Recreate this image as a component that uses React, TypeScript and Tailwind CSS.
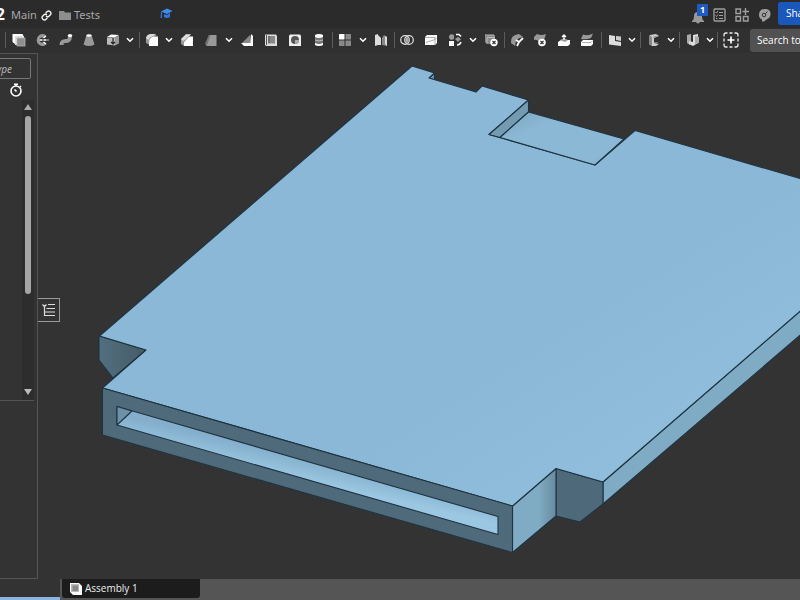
import React from "react";

type IconProps = { children: React.ReactNode };

function Glyph({ children }: IconProps) {
  return (
    <svg viewBox="0 0 14 14" className="size-[14px] shrink-0" aria-hidden="true">
      {children}
    </svg>
  );
}

function Tool({ label, children }: { label: string; children: React.ReactNode }) {
  return (
    <button type="button" aria-label={label} className="flex h-6 w-[23px] shrink-0 items-center justify-center">
      <Glyph>{children}</Glyph>
    </button>
  );
}

function More({ label }: { label: string }) {
  return (
    <button type="button" aria-label={label} className="flex h-6 w-[11px] shrink-0 items-center justify-center">
      <svg viewBox="0 0 8 6" className="h-[6px] w-2" aria-hidden="true">
        <path d="M1 1.2 4 4.2 7 1.2" fill="none" stroke="#fff" strokeWidth="1.6" />
      </svg>
    </button>
  );
}

const group = "flex h-4 shrink-0 items-center justify-between border-r border-[#5c5c5c]";

function Toolbar() {
  return (
    <div className="flex h-[25px] shrink-0 items-center overflow-hidden bg-[#303030] pb-px">
      <div className="h-4 w-[6px] shrink-0 border-r border-[#5c5c5c]" />
      <div className={group + " w-[134px] pl-px pr-[3px]"}>
        <Tool label="Extrude">
          <path d="M.5 1h10l1 2H3v8L.5 9z" fill="#fff" />
          <path d="M3 3h9v2H5v7H3z" fill="#ddd" />
          <rect x="5" y="5" width="8" height="8" fill="#8e8e8e" stroke="#bbb" strokeWidth=".7" />
        </Tool>
        <Tool label="Revolve">
          <path d="M11 2.700 9.500 1.300A6 6 0 1 0 9.500 12.700L11.500 11 8.500 9A2.500 2.500 0 1 1 8.500 5z" fill="#999" />
          <path d="M4.500 7h9" stroke="#fff" strokeWidth="1.300" strokeDasharray="3 1" />
          <path d="m8.500 5 2.500-2M8.500 9l2.500 2" stroke="#fff" strokeWidth="1.300" />
        </Tool>
        <Tool label="Sweep">
          <path d="M2.500 12c0-4 2-4 4.500-4s4-1 4-5" fill="none" stroke="#999" strokeWidth="4" />
          <ellipse cx="11" cy="2.500" rx="2.200" ry="1.500" fill="#fff" />
        </Tool>
        <Tool label="Loft">
          <path d="M4.500 2h5l3 9.500q-5.500 3-11 0z" fill="#999" />
          <ellipse cx="7" cy="2.500" rx="2.700" ry="1.300" fill="#fff" />
        </Tool>
        <Tool label="Thicken">
          <path d="m1 4 4-2.500 8 .5-4 2.500z" fill="#fff" />
          <path d="M1 4.500h8v8l-8-1z" fill="#bbb" />
          <path d="m9 4.500 4-2v8l-4 2z" fill="#999" />
          <path d="M7 5v6M5 9l2 2 2-2" fill="none" stroke="#222" strokeWidth="1.200" />
        </Tool>
        <More label="More solid tools" />
      </div>
      <div className={group + " w-[193px] pr-[2px]"}>
        <Tool label="Fillet">
          <path d="m1 5 4-3.500 7 .5-3 2q-4 1-4 8L1 10z" fill="#999" />
          <path d="M4 13V8.500Q5 4 9 3.500h4V13z" fill="#fff" />
          <path d="M1 5q1-4 5-4h5L8 3Q4 4 3.500 7z" fill="#ddd" />
        </Tool>
        <More label="More fillet tools" />
        <Tool label="Chamfer">
          <path d="m1 6 5-5h5L4 9v4l-3-2z" fill="#999" />
          <path d="M4 13V9l5-5.500h4V13z" fill="#fff" />
          <path d="M1 6 6 1.500h5L8 4 3.500 8z" fill="#ddd" />
        </Tool>
        <Tool label="Draft">
          <path d="M6 2h6.500v11H2.500z" fill="#999" />
          <path d="m5 1.500-4 9.500 1.500 2L6.500 2.500z" fill="#777" />
        </Tool>
        <More label="More draft tools" />
        <Tool label="Rib">
          <path d="m11 1 2 2v10H4l-3-3h9z" fill="#fff" />
          <path d="m10 2 .5 8H2z" fill="#888" />
        </Tool>
        <Tool label="Shell">
          <path d="M1 1.500h11l1 1.500v10H2l-1-1z" fill="#ddd" />
          <path d="M4 3h7v7.500H4z" fill="#888" />
          <path d="M5 3v7M2.500 2v10" stroke="#555" />
        </Tool>
        <Tool label="Hole">
          <path d="m1 2.500 1-1h10l1 1V13H1z" fill="#eee" />
          <circle cx="7" cy="7" r="4" fill="#555" />
          <path d="M7 7h4A4 4 0 0 1 7 11z" fill="#aaa" />
        </Tool>
        <Tool label="Thread">
          <path d="M3 2q4-2 8 0v10q-4 2-8 0z" fill="#777" />
          <path d="M3 2q4-2 8 0v2q-4 2-8 0zM3 10q4 2 8 0v2q-4 2-8 0z" fill="#fff" />
          <path d="M3 7q4 2 8 0" fill="none" stroke="#bbb" />
        </Tool>
      </div>
      <div className={group + " w-[62px] pr-[2px]"}>
        <Tool label="Pattern">
          <rect x="1" y="1" width="5.500" height="5.500" rx=".5" fill="#fff" />
          <path d="M7.500 1H13v5.500H7.500zM1 7.500h5.500V13H1zM7.500 7.500H13V13H7.500z" fill="#888" />
        </Tool>
        <More label="More pattern tools" />
        <Tool label="Mirror">
          <path d="m1 2 3-1v11l-3 1zM4 2l3 3v7H4z" fill="#ddd" />
          <path d="m8 5 2-3 3 2v9l-5-1z" fill="#888" />
          <path d="M11 3v8l2 2V4z" fill="#ddd" />
        </Tool>
      </div>
      <div className={group + " w-[110px] pr-[2px]"}>
        <Tool label="Boolean">
          <circle cx="5" cy="7" r="4.300" fill="none" stroke="#ddd" strokeWidth="1.200" />
          <circle cx="9" cy="7" r="4.300" fill="none" stroke="#ddd" strokeWidth="1.200" />
          <path d="M7 3.500q3.500 3.500 0 7-3.500-3.500 0-7" fill="#aaa" />
        </Tool>
        <Tool label="Split">
          <path d="M1 4l2-2h10v8l-2 2H1z" fill="#fff" />
          <path d="M1 4.500h10V12M2 9.500l9-3 2-2" fill="none" stroke="#888" strokeWidth=".7" />
        </Tool>
        <Tool label="Transform">
          <path d="m1 3 2-2 3 1v4L3 7 1 5z" fill="#999" />
          <path d="M1 8h5v5H1z" fill="#fff" />
          <path d="m7 6 3-2 3 2-3 3z" fill="#999" />
          <path d="M8 1.500h3l2 2M13 9q-1 3-4 3" fill="none" stroke="#fff" strokeWidth="1.600" />
        </Tool>
        <More label="More transform tools" />
        <Tool label="Delete part">
          <path d="M1 2h10v9H3l-2-2z" fill="#888" />
          <path d="M1 2h9M3 4.500h8M3 4.500v6" stroke="#bbb" />
          <circle cx="10" cy="9.500" r="3.700" fill="#fff" />
          <path d="m8.500 8 3 3m0-3-3 3" stroke="#333" strokeWidth="1.200" />
        </Tool>
      </div>
      <div className={group + " w-[97px] pr-[2px]"}>
        <Tool label="Modify fillet">
          <path d="M1 10q-1-8 8-9l4 3q-8 1-8 9z" fill="#999" />
          <path d="m6 7 3 2m4-4-4 4-2 4" fill="none" stroke="#fff" strokeWidth="1.800" />
        </Tool>
        <Tool label="Delete face">
          <path d="m1 4 3-3q4 2 9 0l-2 6-5 2Q4 6 1 7z" fill="#999" />
          <circle cx="9" cy="9.500" r="3.800" fill="#fff" />
          <path d="m7.500 8 3 3m0-3-3 3" stroke="#333" strokeWidth="1.200" />
        </Tool>
        <Tool label="Move face">
          <path d="m1 9 3-2h9v4l-2 2H1z" fill="#fff" />
          <path d="m3 7 4-2 4 2-3 2z" fill="#999" />
          <path d="M7 7V2M5 4l2-2 2 2" fill="none" stroke="#fff" strokeWidth="1.300" />
        </Tool>
        <Tool label="Replace face">
          <path d="m1 6 2-4.500q5 2 10-1l-2 4.500q-5 2-10 1" fill="#999" />
          <path d="m1 9 2-2h10v4l-2 2H1z" fill="#fff" />
          <path d="M2 9.500h9l2-2" fill="none" stroke="#888" strokeWidth=".7" />
        </Tool>
      </div>
      <div className={group + " w-[39px] pl-px pr-[3px]"}>
        <Tool label="Sheet metal">
          <path d="m1 2 6 1v5l6 1v4L1 11.500z" fill="#ddd" />
          <path d="m8 3 5 .5V8L8 7z" fill="#ccc" />
        </Tool>
        <More label="More sheet metal tools" />
      </div>
      <div className={group + " w-[39px] pl-px pr-[3px]"}>
        <Tool label="Frame">
          <path d="m3 2 6-1 3 2-5 2v5l5 1-3 2H5l-3-2z" fill="#ccc" />
          <path d="m2 2 3 2v9l-3-2z" fill="#888" />
          <path d="m6 4.500 4-1.500M7 9.500h4" stroke="#888" strokeWidth=".8" />
        </Tool>
        <More label="More frame tools" />
      </div>
      <div className={group + " w-[38px] pl-px pr-[2px]"}>
        <Tool label="Custom features">
          <path d="m1 2 4-1v7l-1 4-3-2z" fill="#aaa" />
          <path d="m3 8 4 1V2l5-1v9l-5 3-4-2z" fill="#ddd" />
          <path d="m9 3 4 1v6l-4 1z" fill="#aaa" />
        </Tool>
        <More label="More custom features" />
      </div>
      <button type="button" aria-label="Add custom feature" className="flex h-6 w-[26px] shrink-0 items-center justify-center">
        <svg viewBox="0 0 16 16" className="size-4" fill="none" aria-hidden="true">
          <path d="M1 4.500V3q0-2 2-2h1.500M6.500 1h3M11.500 1H13q2 0 2 2v1.500M15 6.500v3M15 11.500V13q0 2-2 2h-1.500M9.500 15h-3M4.500 15H3q-2 0-2-2v-1.500M1 9.500v-3" stroke="#eee" strokeWidth="1.300" />
          <path d="M8 4.500v7M4.500 8h7" stroke="#fff" strokeWidth="1.700" />
        </svg>
      </button>
      <button type="button" className="ml-[6px] h-[23px] shrink-0 whitespace-nowrap rounded-[3px] bg-[#515151] px-[7px] font-['Open_Sans',sans-serif] text-[10px] font-medium leading-[23px] text-white">
        Search tools…
      </button>
    </div>
  );
}

function Header() {
  return (
    <header className="flex h-7 shrink-0 items-center overflow-hidden bg-[#2b2b2b] text-[11px] text-[#a8a8a8]">
      <span className="flex w-[5px] shrink-0 justify-end text-[16px] font-bold text-white">2</span>
      <span className="ml-[6px] w-[30px] pt-[2px]">Main</span>
      <button type="button" aria-label="Copy link" className="mt-[2px]">
        <svg viewBox="0 0 12 12" className="size-[11px]" fill="none" stroke="#f2f2f2" strokeWidth="1.500" aria-hidden="true">
          <path d="M5 3.500 7 1.500Q8.500 .5 10 2t.5 3L8.500 7Q7 8 5.500 6.500M7 8.500l-2 2Q3.500 11.500 2 10t-.5-3L3.500 5Q5 4 6.500 5.500" />
        </svg>
      </button>
      <a href="#tests" className="ml-[7px] flex items-center gap-[3px] pt-[2px]">
        <svg viewBox="0 0 12 10" className="h-[10px] w-3" aria-hidden="true">
          <path d="M0 1h5l1 1.500h6V10H0z" fill="#8e8e8e" />
        </svg>
        Tests
      </a>
      <button type="button" aria-label="Learning center" className="ml-[60px]">
        <svg viewBox="0 0 13 12" className="h-3 w-[13px]" aria-hidden="true">
          <path d="m1 3.500 6-3 5.500 2.500L7 6z" fill="#418af0" />
          <path d="M4 6v3q3 2 6 0V5L7 7zM1 4h1v6H.5z" fill="#2f75dc" />
        </svg>
      </button>
      <div className="ml-auto flex h-full shrink-0 items-center">
        <button type="button" aria-label="Notifications, 1 unread" className="relative mt-[5px] w-3">
          <svg viewBox="0 0 12 14" className="h-[14px] w-3" aria-hidden="true">
            <path d="M0 11q2-1 2-5 0-4 4-4t4 4q0 4 2 5v1H0zM4 12h4q-2 3-4 0" fill="#999" />
          </svg>
          <span className="absolute -top-[6px] left-[5px] h-3 w-[11px] bg-[#1b5bc2] text-center text-[9px] font-bold leading-3 text-white">1</span>
        </button>
        <button type="button" aria-label="Release tasks" className="ml-[9px] mt-[2px]">
          <svg viewBox="0 0 13 14" className="h-[14px] w-[13px]" fill="none" stroke="#a0a0a0" aria-hidden="true">
            <rect x="1" y="1" width="11" height="12" rx="1" strokeWidth="1.300" />
            <path d="m2.500 4 1 1L5 3M6 4.500h4M2.500 7.500l1 1L5 6.500M6 7.500h4M3 10.500h1.500M6 10.500h4" />
          </svg>
        </button>
        <button type="button" aria-label="App store" className="ml-[9px] mt-[2px]">
          <svg viewBox="0 0 14 14" className="size-[14px]" fill="none" stroke="#a0a0a0" strokeWidth="1.400" aria-hidden="true">
            <path d="M1 1h4.500v4.500H1zM1 8.500h4.500V13H1zM8.500 8.500H13V13H8.500zM10.500 0v7M7.500 3.500H14" />
          </svg>
        </button>
        <button type="button" aria-label="Help" className="ml-[9px] mt-[2px]">
          <svg viewBox="0 0 13 14" className="h-[14px] w-[13px]" aria-hidden="true">
            <path d="M4 13.500v-2Q1 10 1 7q0-6 6-6 5.500 0 5.500 5 0 4-4 5.500L6 13.500z" fill="#a0a0a0" />
            <circle cx="6" cy="7" r="1.800" fill="none" stroke="#333" />
            <path d="m7.500 5.500 2-2" stroke="#333" />
          </svg>
        </button>
        <div className="ml-[7px] h-full w-[22px] overflow-hidden pt-[2px]">
          <button type="button" className="h-[23px] w-11 rounded-[3px] bg-[#1b58bb] pl-2 text-left font-['Open_Sans',sans-serif] text-[10px] font-medium leading-[23px] text-white">Share</button>
        </div>
      </div>
    </header>
  );
}

function Sidebar() {
  return (
    <aside className="flex w-[38px] shrink-0 flex-col border-b border-r border-t border-[#555]">
      <div className="mt-1 flex w-[31px] justify-end overflow-hidden">
        <input
          aria-label="Filter by name or type"
          placeholder="Filter by name or type"
          className="h-[21px] w-40 shrink-0 rounded-[2px] border border-[#777] bg-transparent pr-[18px] text-right text-[10px] italic text-white outline-none placeholder:text-[#b5b5b5]"
        />
      </div>
      <button type="button" aria-label="Regeneration times" className="ml-[9px] mt-1 size-[14px]">
        <svg viewBox="0 0 14 14" className="size-[14px]" fill="none" stroke="#fff" strokeWidth="1.600" aria-hidden="true">
          <circle cx="7" cy="8" r="5" />
          <path d="M5 1.200h4M7 1v2M11 3l1 1M7.500 8.500 5.500 6.500" />
        </svg>
      </button>
      <div className="mr-[3px] mt-[3px] flex h-[301px] justify-end border-b border-[#555]">
        <div className="flex w-3 flex-col items-center bg-[#2d2d2d] pb-[5px] pt-1">
          <svg viewBox="0 0 8 6" className="mb-[6px] h-[6px] w-2" aria-hidden="true">
            <path d="M0 6 4 0l4 6z" fill="#aaa" />
          </svg>
          <div className="h-[178px] w-[6px] rounded-full bg-[#a5a5a5]" />
          <svg viewBox="0 0 8 6" className="mt-auto h-[6px] w-2" aria-hidden="true">
            <path d="M0 0h8L4 6z" fill="#bbb" />
          </svg>
        </div>
      </div>
    </aside>
  );
}

function Model() {
  return (
    <svg viewBox="38 53 762 526" preserveAspectRatio="xMidYMid slice" className="absolute inset-0 size-full" role="img" aria-label="3D part">
      <defs>
        <linearGradient id="top" x1="0" y1="0" x2="1" y2="1">
          <stop offset="0.6" stopColor="#8ab8d6" />
          <stop offset="1" stopColor="#93c2df" />
        </linearGradient>
        <linearGradient id="notch" x1="0" y1="0" x2="1" y2="0">
          <stop offset="0" stopColor="#526f80" />
          <stop offset="1" stopColor="#465b67" />
        </linearGradient>
        <linearGradient id="slot" gradientUnits="userSpaceOnUse" x1="300" y1="456" x2="295" y2="478">
          <stop offset="0" stopColor="#84aecb" />
          <stop offset="1" stopColor="#9bc7e2" />
        </linearGradient>
        <linearGradient id="wall" x1="0" y1="0" x2="1" y2="0">
          <stop offset="0.6" stopColor="#80abc4" />
          <stop offset="1" stopColor="#668b9f" />
        </linearGradient>
        <linearGradient id="floor" x1="0" y1="0" x2="1" y2="1">
          <stop offset="0" stopColor="#7ca5bf" />
          <stop offset="0.3" stopColor="#8bb8d4" />
          <stop offset="0.8" stopColor="#8bb8d4" />
          <stop offset="1" stopColor="#83adc7" />
        </linearGradient>
      </defs>
      <g stroke="#1e3442" strokeWidth="1.100" strokeLinejoin="round">
        <path d="M99 336 146 350 113 378 99 360z" fill="url(#notch)" />
        <path d="M603 482 805 307V331L603 504z" fill="#80abc4" />
        <path d="M556 468.500 603 482V504L580 522 556 516z" fill="#4e6979" />
        <path d="M512.500 506 556 468.500V516L512.500 552.500z" fill="url(#wall)" />
        <path d="M434.500 73V80L429 78z" fill="#6d94ab" />
        <path d="M99.500 336 412 66 434.500 73 429 78 476 92 482 86 528.500 100 489 134.500 595 165 635 130.500 805 180V307L603 482 556 468.500 512.500 506 102.500 388 146 350z" fill="url(#top)" />
        <path d="M528.500 100 489 134.500 500 137.500 528.500 112z" fill="#739bb2" />
        <path d="M528.500 112 500 137.500 595 165 624 139z" fill="url(#floor)" />
        <path d="M102.500 388 512.500 506V552.500L102.500 435z" fill="#4f6b7b" />
        <path d="M117 406.500 498 516.500V534.500L117 425z" fill="url(#slot)" />
        <path d="M117 406.500 132 411 117 425z" fill="#6d91a6" />
      </g>
    </svg>
  );
}

export default function App() {
  return (
    <div className="flex h-screen flex-col overflow-hidden bg-[#333] font-['Noto_Sans','Open_Sans',sans-serif]">
      <Header />
      <Toolbar />
      <main className="flex min-h-0 flex-1">
        <Sidebar />
        <section aria-label="Canvas" className="relative min-w-0 flex-1">
          <Model />
          <button type="button" aria-label="Toggle feature list" className="absolute left-0 top-[245px] flex h-6 w-[22px] items-center justify-center border border-l-0 border-[#999] bg-[#333]">
            <svg viewBox="0 0 14 14" className="size-[14px]" fill="none" stroke="#ddd" aria-hidden="true">
              <path d="m.5 1.500 2 2 2-2" strokeWidth="1.300" />
              <path d="M2.500 4v8.500H13M6 1.500h7M4.500 5.500H13M3 9h10" strokeWidth="1.200" />
            </svg>
          </button>
        </section>
      </main>
      <nav aria-label="Document tabs" className="flex h-[21px] shrink-0 items-start bg-[#555]">
        <button type="button" aria-label="Part Studio 1" className="h-full w-[60px] border-b-[3px] border-[#8db4dc] bg-[#333]" />
        <button type="button" className="ml-[2px] flex h-[19px] w-[138px] items-center gap-[3px] rounded-b-[3px] bg-[#1c1c1c] pl-2 font-['Open_Sans',sans-serif] text-[10px] text-[#eee]">
          <svg viewBox="0 0 12 12" className="size-3" aria-hidden="true">
            <path d="M0 0h9l3 3v9H3L0 9z" fill="#fff" />
            <path d="M1 1h8v8H1z" fill="#bbb" />
            <path d="M2.500 2.500H8V8H2.500z" fill="#888" />
          </svg>
          Assembly 1
        </button>
      </nav>
    </div>
  );
}
